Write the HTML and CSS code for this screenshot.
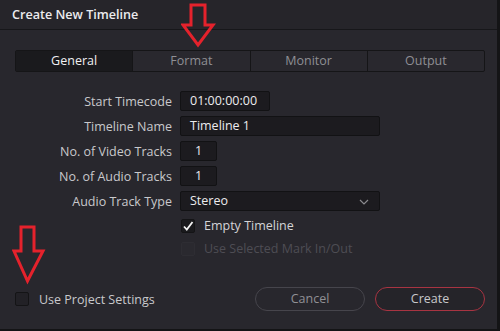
FILE: index.html
```html
<!DOCTYPE html>
<html>
<head>
<meta charset="utf-8">
<link rel="stylesheet" href="styles.css">
</head>
<body>
<div class="window">
  <div class="titlebar">Create New Timeline</div>
  <div class="content">
    <div class="tabs">
      <div class="tab active">General</div>
      <div class="tab">Format</div>
      <div class="tab">Monitor</div>
      <div class="tab">Output</div>
    </div>
    <div class="form">
      <div class="row"><label class="lbl">Start Timecode</label><div class="field w-tc">01:00:00:00</div></div>
      <div class="row"><label class="lbl">Timeline Name</label><div class="field w-wide">Timeline 1</div></div>
      <div class="row"><label class="lbl">No. of Video Tracks</label><div class="field w-num">1</div></div>
      <div class="row"><label class="lbl">No. of Audio Tracks</label><div class="field w-num">1</div></div>
      <div class="row"><label class="lbl">Audio Track Type</label>
        <div class="field w-wide select">Stereo
          <svg class="chev" width="10" height="6" viewBox="0 0 10 6"><path d="M1 1 L5 5 L9 1" fill="none" stroke="#8a8a8e" stroke-width="1.2"/></svg>
        </div>
      </div>
      <div class="row check-row"><span class="lbl"></span>
        <span class="box checked"><svg width="12" height="12" viewBox="0 0 12 12"><path d="M2 6.5 L4.8 9.5 L10.5 2" fill="none" stroke="#f2f2f2" stroke-width="1.8"/></svg></span>
        <span class="check-text">Empty Timeline</span></div>
      <div class="row check-row disabled"><span class="lbl"></span>
        <span class="box"></span>
        <span class="check-text">Use Selected Mark In/Out</span></div>
    </div>
    <div class="footer">
      <div class="project">
        <span class="box"></span>
        <span class="check-text">Use Project Settings</span>
      </div>
      <div class="buttons">
        <div class="btn cancel">Cancel</div>
        <div class="btn create">Create</div>
      </div>
    </div>
  </div>
  <svg class="arrow arrow-top" width="40" height="46" viewBox="0 0 40 46">
    <path d="M10 2 H24 V22 H32 L17 42 L2 22 H10 Z" fill="none" stroke="#e5222c" stroke-width="3" stroke-linejoin="miter"/>
  </svg>
  <svg class="arrow arrow-bottom" width="36" height="60" viewBox="0 0 36 60">
    <path d="M9 2 H22 V26 H31 L15.5 56 L2 26 H9 Z" fill="none" stroke="#e5222c" stroke-width="3" stroke-linejoin="miter"/>
  </svg>
</div>
</body>
</html>
```
FILE: styles.css
```css
* { box-sizing: border-box; }
html, body { margin: 0; padding: 0; background: #1a1a1d; }
body {
  font-family: "Open Sans", "Noto Sans", sans-serif;
  font-size: 12.5px;
  color: #cfcfd2;
}
.window {
  position: relative;
  width: 500px;
  height: 331px;
  background: #28272d;
  border-right: 3px solid #141416;
  border-bottom: 2px solid #141416;
  overflow: hidden;
}
.titlebar {
  height: 30px;
  padding-left: 12px;
  line-height: 30px;
  font-size: 12.6px;
  font-weight: 600;
  color: #ececee;
  background: #26252a;
  border-bottom: 1px solid #17171a;
}
.content {
  padding: 20px 12px 0 15px;
}
.tabs {
  display: flex;
  height: 22px;
  width: 470px;
  border: 1px solid #151517;
  border-radius: 2px;
  background: #29282e;
}
.tab {
  flex: 1;
  text-align: center;
  line-height: 20px;
  color: #8f8f94;
  border-left: 1px solid #151517;
}
.tab:first-child { border-left: none; }
.tab.active {
  background: #1a1a1d;
  color: #f0f0f2;
}
.form {
  margin-top: 19px;
  display: flex;
  flex-direction: column;
  gap: 5px;
}
.row {
  display: flex;
  align-items: center;
  height: 20px;
}
.lbl {
  width: 165px;
  text-align: right;
  padding-right: 8px;
  color: #c9c9cc;
  flex: none;
}
.field {
  height: 20px;
  line-height: 18px;
  background: #1c1b1f;
  border: 1px solid #121214;
  border-radius: 2px;
  padding-left: 9px;
  color: #ececee;
}
.w-tc { width: 90px; }
.w-wide { width: 200px; }
.w-num { width: 37px; padding-left: 0; text-align: center; }
.select { position: relative; }
.chev { position: absolute; right: 10px; top: 7px; }
.check-row { height: 19px; }
.check-row.disabled { margin-top: -1px; }
.box {
  width: 14px;
  height: 14px;
  border: 1px solid #141416;
  border-radius: 2px;
  background: #202024;
  margin-left: 1px;
  display: flex;
  align-items: center;
  justify-content: center;
  flex: none;
}
.box.checked { background: #1a1a1d; }
.check-text {
  margin-left: 9px;
  color: #d4d4d7;
}
.disabled .box { background: #2a292f; border-color: #2e2d33; }
.disabled .check-text { color: #4e4d54; }
.footer {
  margin-top: 29px;
  display: flex;
  align-items: center;
  justify-content: space-between;
  width: 470px;
}
.project {
  display: flex;
  align-items: center;
}
.project .box { margin-left: 0; background: #222126; }
.project .check-text { margin-left: 10px; color: #c9c9cc; }
.buttons {
  display: flex;
  gap: 10px;
}
.btn {
  width: 110px;
  height: 24px;
  line-height: 22px;
  text-align: center;
  border-radius: 12px;
  border: 1px solid #46454c;
  color: #909095;
  background: #28272d;
}
.btn.create {
  border-color: #a83442;
  color: #c8c8cb;
  background: #252429;
}
.arrow { position: absolute; }
.arrow-top { left: 181px; top: 3px; }
.arrow-bottom { left: 12px; top: 225px; }
```
